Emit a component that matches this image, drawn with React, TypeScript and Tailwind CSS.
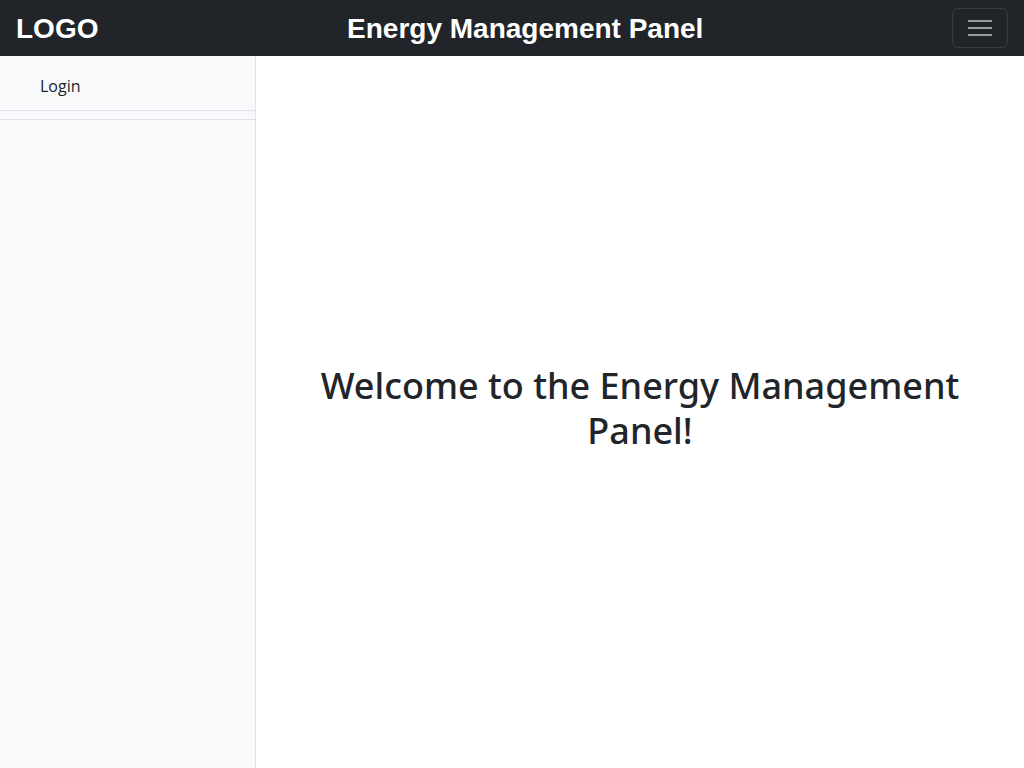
export default function App() {
  return (
    <div className="flex h-screen flex-col bg-white font-['Open_Sans',sans-serif] text-[#212529]">
      {/* Top bar */}
      <nav className="flex h-14 shrink-0 items-center justify-between bg-[#212529] pl-4 pr-4 text-white">
        <span className="pt-0.5 font-['Liberation_Sans',Arial,sans-serif] text-[28px] font-bold leading-none">LOGO</span>
        <span className="pt-0.5 font-['Liberation_Sans',Arial,sans-serif] text-[28px] font-bold leading-none">
          Energy Management Panel
        </span>
        <button className="flex h-10 w-14 items-center justify-center rounded-md border border-white/10">
          <svg width="24" height="18" viewBox="0 0 24 18">
            <path d="M0 2h24M0 9h24M0 16h24" stroke="rgba(255,255,255,0.55)" strokeWidth="2" />
          </svg>
        </button>
      </nav>

      <div className="flex flex-1">
        {/* Sidebar */}
        <aside className="w-64 shrink-0 border-r border-[#dee2e6] bg-[#f8f9fa]">
          <div className="flex h-[55px] items-center border-b border-[#dee2e6] pl-10 pt-1.5 text-base">Login</div>
          <div className="mt-2 border-b border-[#dee2e6]" />
        </aside>

        {/* Main */}
        <main className="flex flex-1 items-center justify-center px-12 pb-2">
          <h1 className="text-center font-['Noto_Sans',sans-serif] text-[36px] font-medium leading-[1.25]">
            Welcome to the Energy Management Panel!
          </h1>
        </main>
      </div>
    </div>
  );
}
